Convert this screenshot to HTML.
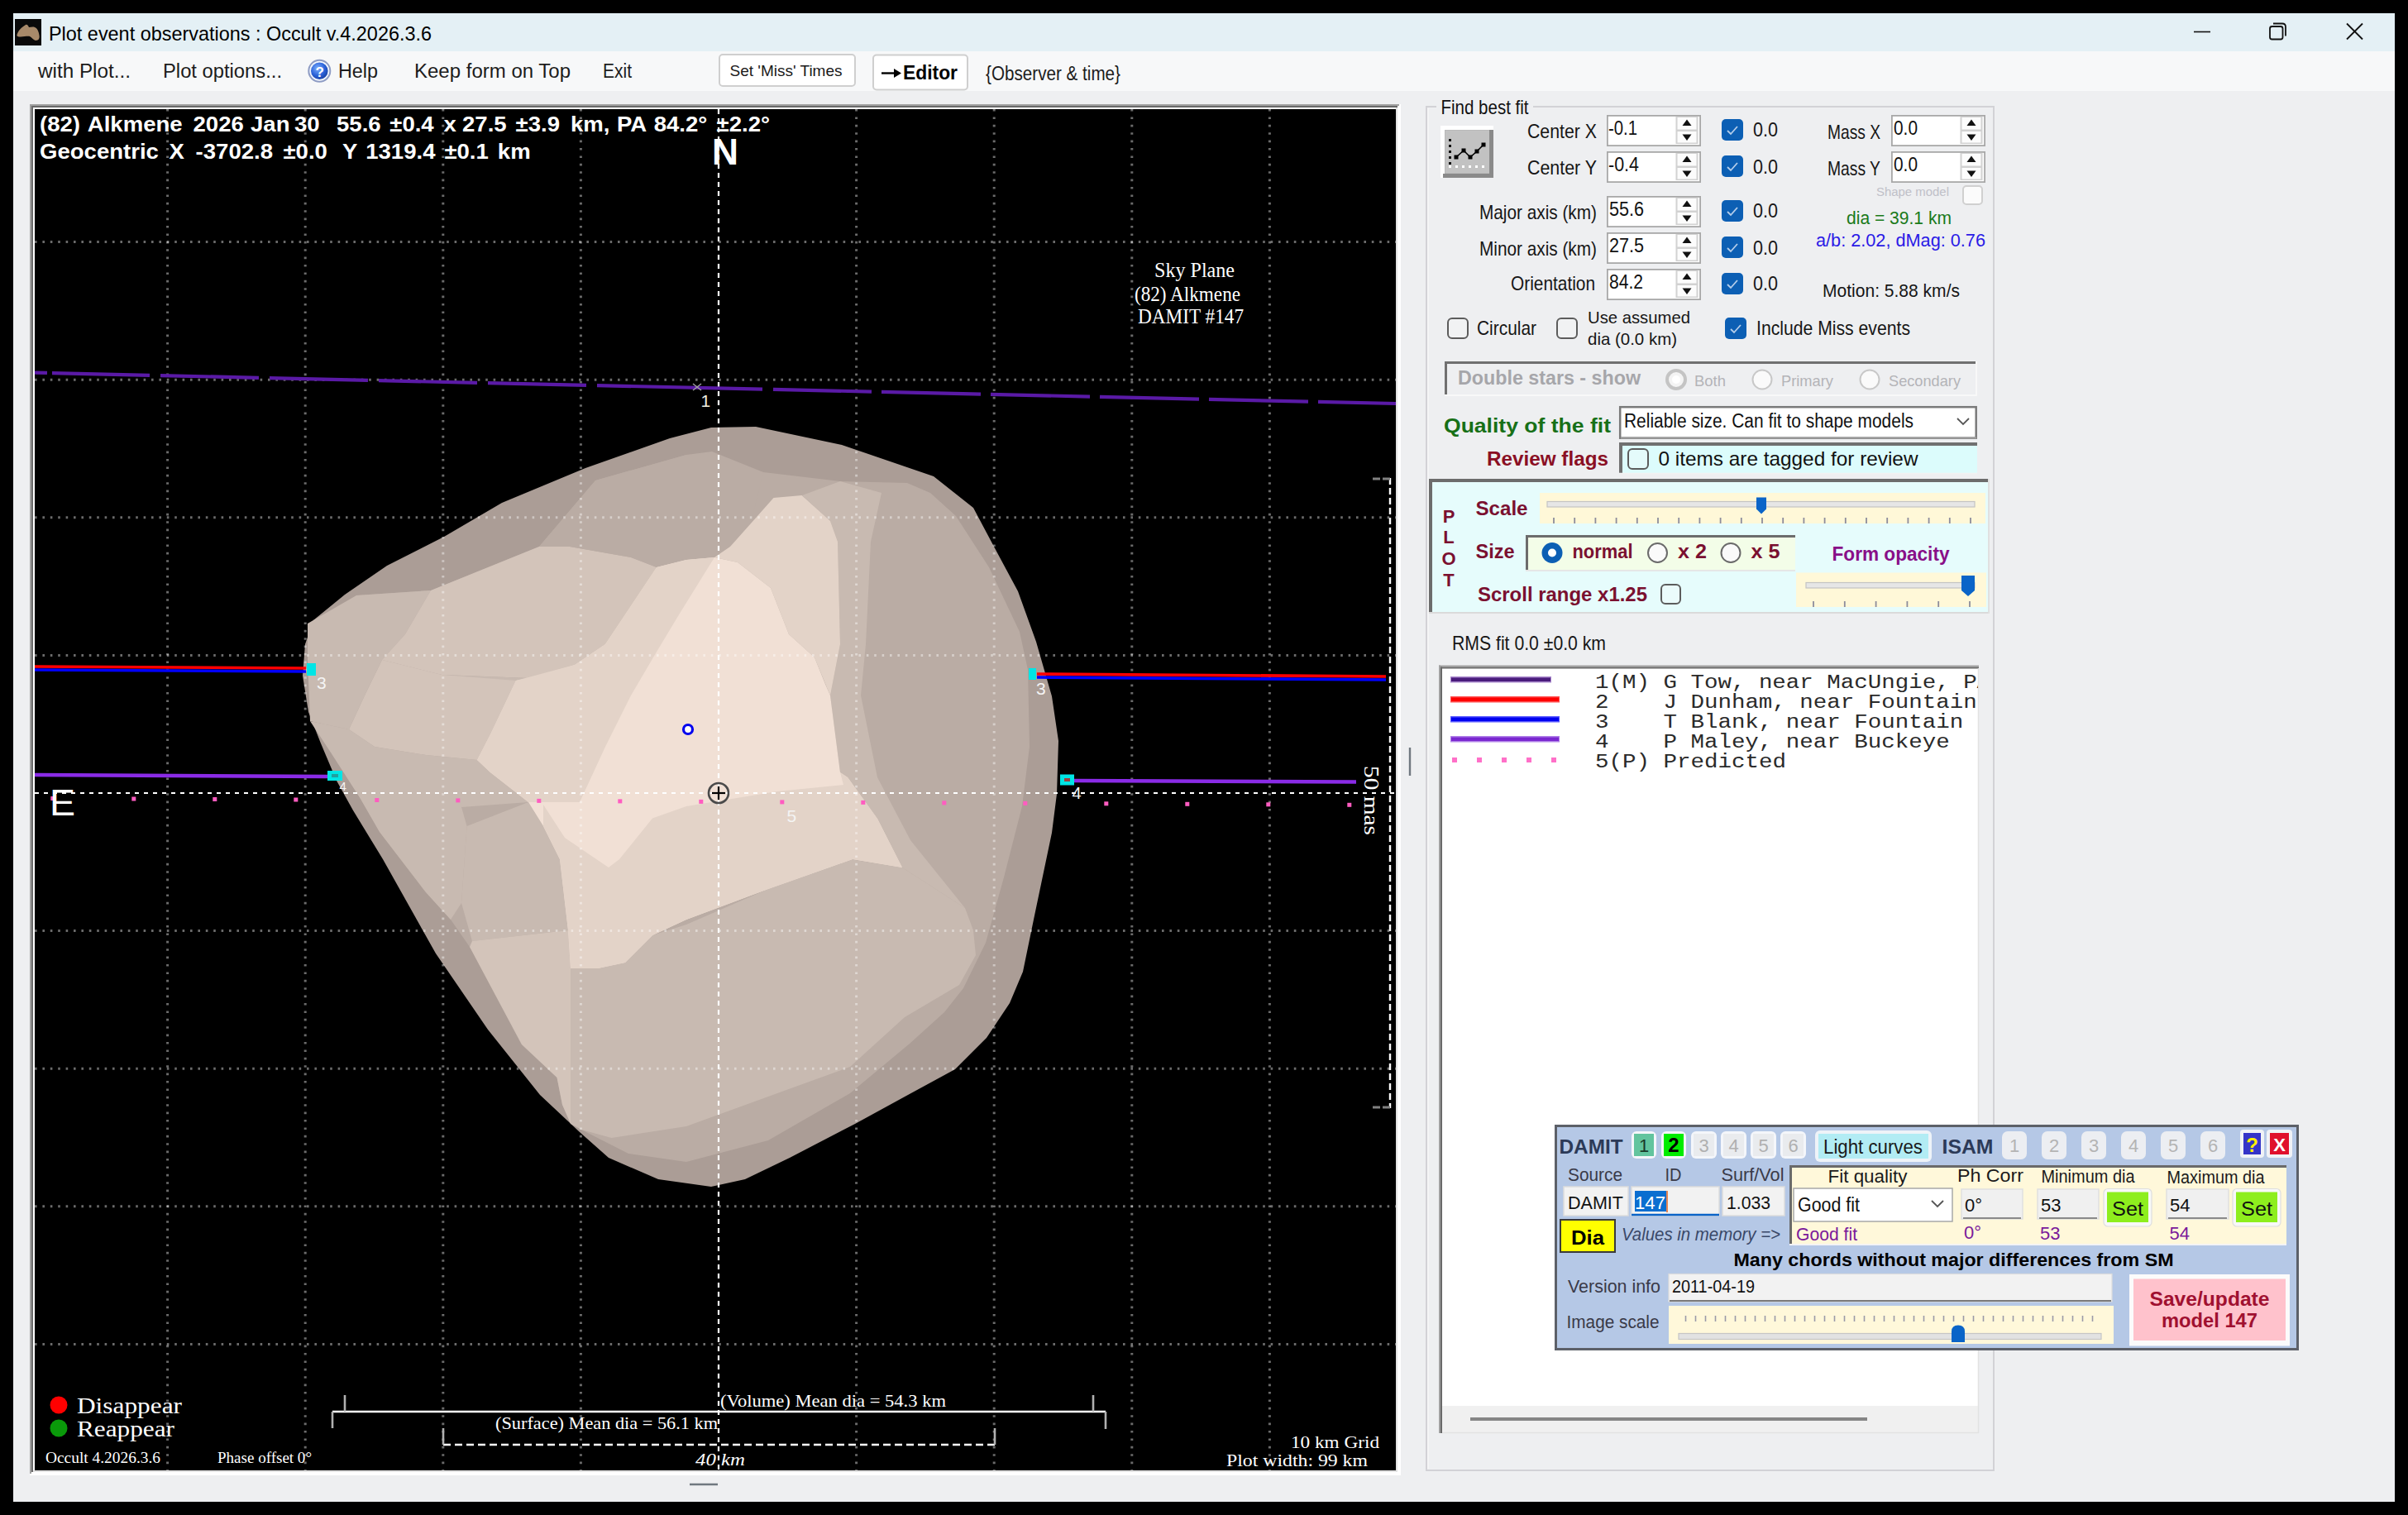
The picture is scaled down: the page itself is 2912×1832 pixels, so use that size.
<!DOCTYPE html>
<html><head><meta charset="utf-8"><title>Plot event observations : Occult v.4.2026.3.6</title>
<style>html,body{margin:0;padding:0;background:#000;overflow:hidden}svg{display:block}text{white-space:pre}</style>
</head><body>
<svg width="2912" height="1832" viewBox="0 0 2912 1832" font-family='"Liberation Sans", sans-serif'>
<rect x="0.0" y="0.0" width="2912.0" height="1832.0" fill="#000"/>
<rect x="16.0" y="16.0" width="2880.0" height="1800.0" fill="#eeeff1"/>
<rect x="16.0" y="16.0" width="2880.0" height="46.0" fill="#e4f0f5"/>
<rect x="16.0" y="62.0" width="2880.0" height="48.0" fill="#f7f8f9"/>
<rect x="18.0" y="23.0" width="32.0" height="32.0" fill="#0a0a0a"/>
<path d="M20.5,42 C22,37 26,33 31,30 C33,29 34,31 35,33 C37,33 40,32 42,33 C45,34 47,38 47.5,43 C48,46 47,49 43,49 C40,48 38,45 36,44 C33,43.5 29,44.5 25,44.5 C22,44.5 20,44 20.5,42 Z" fill="#a88a6a"/>
<text x="59.0" y="49.0" font-size="24" fill="#000" textLength="463.0" lengthAdjust="spacingAndGlyphs">Plot event observations : Occult v.4.2026.3.6</text>
<line x1="2653.0" y1="38.5" x2="2673.0" y2="38.5" stroke="#111" stroke-width="1.6"/>
<rect x="2745" y="32" width="15.5" height="15.5" rx="2.5" fill="none" stroke="#111" stroke-width="1.8"/>
<path d="M2749,28.5 H2760 Q2764,28.5 2764,32.5 V43.5" fill="none" stroke="#111" stroke-width="1.8"/>
<line x1="2838.0" y1="28.5" x2="2857.0" y2="47.5" stroke="#111" stroke-width="1.8"/>
<line x1="2857.0" y1="28.5" x2="2838.0" y2="47.5" stroke="#111" stroke-width="1.8"/>
<text x="46.0" y="93.5" font-size="23" fill="#1c1c1c" textLength="112.0" lengthAdjust="spacingAndGlyphs">with Plot...</text>
<text x="197.0" y="93.5" font-size="23" fill="#1c1c1c" textLength="144.0" lengthAdjust="spacingAndGlyphs">Plot options...</text>
<defs><radialGradient id="hg" cx="0.4" cy="0.35" r="0.7"><stop offset="0" stop-color="#7fb0ff"/><stop offset="0.6" stop-color="#2a62d8"/><stop offset="1" stop-color="#1a3fa0"/></radialGradient></defs>
<circle cx="386.3" cy="85.8" r="13.0" fill="#f4f8ff" stroke="#8e9cc4" stroke-width="2"/>
<circle cx="386.3" cy="85.8" r="10.3" fill="url(#hg)"/>
<text x="386.8" y="92.5" font-size="17" fill="#fff" font-weight="bold" text-anchor="middle">?</text>
<text x="409.0" y="93.5" font-size="23" fill="#1c1c1c" textLength="48.0" lengthAdjust="spacingAndGlyphs">Help</text>
<text x="501.0" y="93.5" font-size="23" fill="#1c1c1c" textLength="189.0" lengthAdjust="spacingAndGlyphs">Keep form on Top</text>
<text x="729.0" y="93.5" font-size="23" fill="#1c1c1c" textLength="35.0" lengthAdjust="spacingAndGlyphs">Exit</text>
<rect x="870" y="66" width="164" height="38" rx="4" fill="#fff" stroke="#cfcfcf" stroke-width="2"/>
<text x="882.5" y="92.0" font-size="19" fill="#1a1a1a" textLength="136.0" lengthAdjust="spacingAndGlyphs">Set 'Miss' Times</text>
<rect x="1056" y="66.5" width="114" height="42" rx="4" fill="#fff" stroke="#cfcfcf" stroke-width="2"/>
<line x1="1066.0" y1="88.5" x2="1084.0" y2="88.5" stroke="#000" stroke-width="2.4"/>
<polygon points="1090.0,88.5 1081.0,83.0 1081.0,94.0" fill="#000"/>
<text x="1092.0" y="95.6" font-size="24" fill="#000" font-weight="bold" textLength="66.0" lengthAdjust="spacingAndGlyphs">Editor</text>
<text x="1192.0" y="97.0" font-size="23" fill="#1c1c1c" textLength="163.0" lengthAdjust="spacingAndGlyphs">{Observer &amp; time}</text>
<rect x="36.0" y="126.0" width="1658.0" height="1658.0" fill="#fff"/>
<rect x="36.0" y="126.0" width="1656.0" height="2.0" fill="#a0a0a0"/>
<rect x="36.0" y="126.0" width="2.0" height="1656.0" fill="#a0a0a0"/>
<rect x="38.0" y="128.0" width="1652.0" height="2.0" fill="#696969"/>
<rect x="38.0" y="128.0" width="2.0" height="1652.0" fill="#696969"/>
<rect x="1688.0" y="130.0" width="2.0" height="1650.0" fill="#e3e3e3"/>
<rect x="40.0" y="1778.0" width="1650.0" height="2.0" fill="#e3e3e3"/>
<rect x="40.0" y="130.0" width="1648.0" height="2.0" fill="#fff"/>
<rect x="40.0" y="130.0" width="2.0" height="1648.0" fill="#fff"/>
<rect x="42.0" y="132.0" width="1646.0" height="1646.0" fill="#000"/>
<defs><clipPath id="pc"><rect x="42" y="132" width="1646" height="1646"/></clipPath></defs>
<g clip-path="url(#pc)">
<polygon points="860.0,517.0 914.0,516.0 1018.0,538.0 1129.0,576.0 1177.0,614.0 1202.0,661.0 1231.0,715.0 1253.0,776.0 1272.0,842.0 1280.0,896.0 1278.0,960.0 1272.0,1007.0 1250.0,1112.0 1237.0,1175.0 1221.0,1213.0 1193.0,1255.0 1155.0,1293.0 1098.0,1324.0 1034.0,1359.0 955.0,1400.0 901.0,1426.0 860.0,1435.0 796.0,1426.0 736.0,1400.0 701.0,1369.0 653.0,1324.0 590.0,1245.0 527.0,1153.0 463.0,1039.0 427.0,980.0 407.0,944.0 388.0,899.0 373.0,861.0 366.0,817.0 369.0,779.0 379.0,750.0 417.0,719.0 468.0,684.0 537.0,649.0 607.0,608.0 708.0,566.0 810.0,530.0" fill="#ab9d96"/>
<polygon points="380.0,770.0 431.0,720.0 521.0,714.0 652.0,661.0 720.0,581.0 830.0,550.0 923.0,571.0 1016.0,582.0 1097.0,584.0 1125.0,596.0 1156.0,624.0 1196.0,686.0 1233.0,764.0 1243.0,810.0 1245.0,903.0 1236.0,975.0 1214.0,1061.0 1192.0,1140.0 1165.0,1195.0 1142.0,1224.0 1100.0,1262.0 1028.0,1322.0 929.0,1379.0 830.0,1405.0 760.0,1395.0 703.0,1366.0 680.0,1336.0 673.5,1303.0 630.6,1263.0 568.0,1145.0 545.0,1112.0 515.0,1079.0 459.0,1006.0 436.0,966.0 400.0,905.0 378.0,850.0" fill="#baaca4"/>
<polygon points="372.0,754.0 431.0,720.0 521.0,714.0 490.0,767.0 462.0,798.0 372.0,798.0" fill="#c8bab1"/>
<polygon points="521.0,714.0 652.0,661.0 689.0,661.0 763.0,674.0 794.0,686.0 732.0,779.0 695.0,804.0 639.0,820.0 534.0,816.0 462.0,798.0 490.0,767.0" fill="#d3c4ba"/>
<polygon points="652.0,661.0 720.0,581.0 830.0,550.0 861.0,546.0 923.0,571.0 908.0,633.0 883.0,661.0 864.0,674.0 830.0,677.0 794.0,686.0 763.0,674.0 689.0,661.0" fill="#baaca4"/>
<polygon points="462.0,798.0 534.0,816.0 639.0,820.0 695.0,804.0 700.0,818.0 640.0,836.0 534.0,832.0 466.0,812.0" fill="#c8bab1"/>
<polygon points="422.0,882.0 441.0,841.0 462.0,798.0 534.0,816.0 624.0,823.0 593.0,888.0 577.0,919.0 515.0,913.0 453.0,903.0" fill="#d3c4ba"/>
<polygon points="375.0,872.0 422.0,882.0 453.0,903.0 515.0,913.0 577.0,919.0 593.0,934.0 639.0,970.0 558.0,976.0 564.6,999.0 558.0,1092.0 545.0,1112.0 515.0,1079.0 459.0,1006.0 436.0,966.0 400.0,910.0" fill="#c8bab1"/>
<polygon points="564.6,999.0 639.0,970.0 657.0,999.0 677.0,1039.0 687.0,1125.0 571.0,1138.0 558.0,1092.0" fill="#c8bab1"/>
<polygon points="571.0,1138.0 687.0,1125.0 690.0,1171.0 690.0,1359.0 680.0,1336.0 673.5,1303.0 631.0,1263.0 568.0,1145.0" fill="#d3c4ba"/>
<polygon points="690.0,1171.0 723.0,1171.0 756.0,1164.0 789.0,1131.0 830.0,1118.0 929.0,1075.0 1028.0,1039.0 1091.0,1049.0 1167.0,1098.0 1177.0,1125.0 1180.0,1155.0 1160.0,1191.0 1094.0,1230.0 1028.0,1290.0 929.0,1326.0 830.0,1362.0 739.5,1376.0 703.0,1366.0 690.0,1359.0" fill="#c8bab1"/>
<polygon points="970.0,599.0 1016.0,582.0 1066.0,596.0 1053.0,655.0 1047.0,779.0 1041.0,841.0 1061.0,940.0 1101.0,1016.0 1167.0,1098.0 1091.0,1049.0 1061.0,990.0 1025.0,940.0 1016.0,934.0 1004.0,841.0 1016.0,779.0 1013.0,655.0 1004.0,630.0" fill="#c8bab1"/>
<polygon points="864.0,674.0 883.0,661.0 908.0,633.0 935.5,602.0 969.6,599.0 1004.0,630.0 1013.0,655.0 1016.0,779.0 1004.0,841.0 985.0,795.0 954.0,767.0 932.0,711.0 892.0,680.0" fill="#e3d3c8"/>
<polygon points="830.0,677.0 864.0,674.0 892.0,680.0 932.0,711.0 954.0,767.0 985.0,795.0 997.5,826.0 1004.0,841.0 1016.0,934.0 1025.0,940.0 1061.0,990.0 1091.0,1049.0 1031.0,1039.0 929.0,1075.0 830.0,1112.0 789.0,1131.0 756.0,1164.0 723.0,1171.0 690.0,1171.0 687.0,1125.0 677.0,1039.0 657.0,999.0 639.0,970.0 593.0,934.0 577.0,919.0 593.0,888.0 624.0,823.0 639.0,820.0 695.0,804.0 732.0,779.0 794.0,686.0" fill="#f1e0d5"/>
<polygon points="1016.0,934.0 1025.0,940.0 1061.0,990.0 1091.0,1049.0 1031.0,1039.0 929.0,1075.0 830.0,1112.0 789.0,1131.0 756.0,1164.0 723.0,1171.0 690.0,1171.0 687.0,1125.0 677.0,1039.0 657.0,999.0 657.0,973.0 683.0,1013.0 706.5,1029.0 736.0,1049.0 749.0,1039.0 789.0,989.5 830.0,975.0 940.0,957.0 1020.0,949.0" fill="#e3d3c8"/>
<polygon points="372.0,798.0 462.0,798.0 441.0,841.0 422.0,882.0 375.0,872.0" fill="#c8bab1"/>
<polygon points="593.0,888.0 624.0,823.0 695.0,804.0 732.0,779.0 794.0,686.0 830.0,677.0 864.0,674.0 820.0,745.0 790.0,795.0 763.0,841.0 732.0,903.0 701.0,970.0 639.0,970.0 593.0,934.0 577.0,919.0" fill="#e3d3c8"/>
<line x1="202.6" y1="132.0" x2="202.6" y2="1778.0" stroke="#ffffff" stroke-width="3" stroke-dasharray="2.6 6.8" stroke-opacity="0.42"/>
<line x1="369.2" y1="132.0" x2="369.2" y2="1778.0" stroke="#ffffff" stroke-width="3" stroke-dasharray="2.6 6.8" stroke-opacity="0.42"/>
<line x1="535.8" y1="132.0" x2="535.8" y2="1778.0" stroke="#ffffff" stroke-width="3" stroke-dasharray="2.6 6.8" stroke-opacity="0.42"/>
<line x1="702.4" y1="132.0" x2="702.4" y2="1778.0" stroke="#ffffff" stroke-width="3" stroke-dasharray="2.6 6.8" stroke-opacity="0.42"/>
<line x1="1035.6" y1="132.0" x2="1035.6" y2="1778.0" stroke="#ffffff" stroke-width="3" stroke-dasharray="2.6 6.8" stroke-opacity="0.42"/>
<line x1="1202.2" y1="132.0" x2="1202.2" y2="1778.0" stroke="#ffffff" stroke-width="3" stroke-dasharray="2.6 6.8" stroke-opacity="0.42"/>
<line x1="1368.8" y1="132.0" x2="1368.8" y2="1778.0" stroke="#ffffff" stroke-width="3" stroke-dasharray="2.6 6.8" stroke-opacity="0.42"/>
<line x1="1535.4" y1="132.0" x2="1535.4" y2="1778.0" stroke="#ffffff" stroke-width="3" stroke-dasharray="2.6 6.8" stroke-opacity="0.42"/>
<line x1="42.0" y1="292.6" x2="1688.0" y2="292.6" stroke="#ffffff" stroke-width="3" stroke-dasharray="2.6 6.8" stroke-opacity="0.42"/>
<line x1="42.0" y1="459.2" x2="1688.0" y2="459.2" stroke="#ffffff" stroke-width="3" stroke-dasharray="2.6 6.8" stroke-opacity="0.42"/>
<line x1="42.0" y1="625.8" x2="1688.0" y2="625.8" stroke="#ffffff" stroke-width="3" stroke-dasharray="2.6 6.8" stroke-opacity="0.42"/>
<line x1="42.0" y1="792.4" x2="1688.0" y2="792.4" stroke="#ffffff" stroke-width="3" stroke-dasharray="2.6 6.8" stroke-opacity="0.42"/>
<line x1="42.0" y1="1125.6" x2="1688.0" y2="1125.6" stroke="#ffffff" stroke-width="3" stroke-dasharray="2.6 6.8" stroke-opacity="0.42"/>
<line x1="42.0" y1="1292.2" x2="1688.0" y2="1292.2" stroke="#ffffff" stroke-width="3" stroke-dasharray="2.6 6.8" stroke-opacity="0.42"/>
<line x1="42.0" y1="1458.8" x2="1688.0" y2="1458.8" stroke="#ffffff" stroke-width="3" stroke-dasharray="2.6 6.8" stroke-opacity="0.42"/>
<line x1="42.0" y1="1625.4" x2="1688.0" y2="1625.4" stroke="#ffffff" stroke-width="3" stroke-dasharray="2.6 6.8" stroke-opacity="0.42"/>
<line x1="869.0" y1="132.0" x2="869.0" y2="1778.0" stroke="#fff" stroke-width="2.2" stroke-dasharray="6 5"/>
<line x1="42.0" y1="959.0" x2="1688.0" y2="959.0" stroke="#fff" stroke-width="2.2" stroke-dasharray="5 6"/>
</g>
<g clip-path="url(#pc)">
<line x1="42.0" y1="450.6" x2="57.0" y2="450.9" stroke="#5a1aa6" stroke-width="4.2"/>
<line x1="63.0" y1="451.1" x2="181.0" y2="453.8" stroke="#5a1aa6" stroke-width="4.2"/>
<line x1="194.0" y1="454.1" x2="313.0" y2="456.8" stroke="#5a1aa6" stroke-width="4.2"/>
<line x1="326.0" y1="457.1" x2="445.0" y2="459.8" stroke="#5a1aa6" stroke-width="4.2"/>
<line x1="458.0" y1="460.1" x2="577.0" y2="462.8" stroke="#5a1aa6" stroke-width="4.2"/>
<line x1="590.0" y1="463.1" x2="709.0" y2="465.8" stroke="#5a1aa6" stroke-width="4.2"/>
<line x1="722.0" y1="466.1" x2="922.0" y2="470.6" stroke="#5a1aa6" stroke-width="4.2"/>
<line x1="935.0" y1="470.9" x2="1054.0" y2="473.6" stroke="#5a1aa6" stroke-width="4.2"/>
<line x1="1066.0" y1="473.9" x2="1186.0" y2="476.6" stroke="#5a1aa6" stroke-width="4.2"/>
<line x1="1198.0" y1="476.9" x2="1318.0" y2="479.6" stroke="#5a1aa6" stroke-width="4.2"/>
<line x1="1330.0" y1="479.9" x2="1450.0" y2="482.6" stroke="#5a1aa6" stroke-width="4.2"/>
<line x1="1462.0" y1="482.9" x2="1582.0" y2="485.6" stroke="#5a1aa6" stroke-width="4.2"/>
<line x1="1594.0" y1="485.9" x2="1688.0" y2="488.0" stroke="#5a1aa6" stroke-width="4.2"/>
<line x1="42.0" y1="806.0" x2="370.0" y2="808.0" stroke="#ff0000" stroke-width="3.6"/>
<line x1="42.0" y1="810.0" x2="370.0" y2="812.0" stroke="#0000ff" stroke-width="3.6"/>
<line x1="1254.0" y1="815.0" x2="1676.0" y2="818.0" stroke="#ff0000" stroke-width="3.6"/>
<line x1="1254.0" y1="819.0" x2="1676.0" y2="822.0" stroke="#0000ff" stroke-width="3.6"/>
<line x1="42.0" y1="937.0" x2="396.0" y2="939.0" stroke="#8a2be6" stroke-width="4.4"/>
<line x1="1299.0" y1="944.0" x2="1640.0" y2="945.5" stroke="#8a2be6" stroke-width="4.4"/>
<rect x="371.0" y="802.0" width="11.0" height="15.0" fill="#00e5e5"/>
<rect x="396.0" y="932.0" width="18.0" height="12.0" fill="#00e5e5"/>
<rect x="401.0" y="936.0" width="8.0" height="4.0" fill="#20a0a0"/>
<rect x="1244.0" y="808.0" width="9.0" height="14.0" fill="#00e5e5"/>
<rect x="1282.0" y="936.5" width="17.0" height="13.0" fill="#00e5e5"/>
<rect x="1287.0" y="941.0" width="7.0" height="4.0" fill="#a04040"/>
<text x="383.0" y="833.0" font-size="21" fill="#f4f4f4">3</text>
<text x="410.5" y="955.5" font-size="15" fill="#f4f4f4">4</text>
<text x="1253.0" y="840.0" font-size="21" fill="#f4f4f4">3</text>
<text x="1296.5" y="965.5" font-size="20" fill="#f4f4f4">4</text>
<text x="847.5" y="492.0" font-size="21" fill="#f0f0e0">1</text>
<text x="951.5" y="993.5" font-size="21" fill="#f4f4f4">5</text>
<line x1="838.0" y1="464.0" x2="848.0" y2="472.0" stroke="#a0a0a0" stroke-width="1.5"/>
<line x1="848.0" y1="464.0" x2="838.0" y2="472.0" stroke="#a0a0a0" stroke-width="1.5"/>
<rect x="61.3" y="963.0" width="5.0" height="5.0" fill="#ff5cc0"/>
<rect x="159.3" y="963.5" width="5.0" height="5.0" fill="#ff5cc0"/>
<rect x="257.3" y="964.0" width="5.0" height="5.0" fill="#ff5cc0"/>
<rect x="355.3" y="964.5" width="5.0" height="5.0" fill="#ff5cc0"/>
<rect x="453.3" y="965.0" width="5.0" height="5.0" fill="#ff5cc0"/>
<rect x="551.3" y="965.4" width="5.0" height="5.0" fill="#ff5cc0"/>
<rect x="649.3" y="965.9" width="5.0" height="5.0" fill="#ff5cc0"/>
<rect x="747.3" y="966.4" width="5.0" height="5.0" fill="#ff5cc0"/>
<rect x="845.3" y="966.9" width="5.0" height="5.0" fill="#ff5cc0"/>
<rect x="943.3" y="967.4" width="5.0" height="5.0" fill="#ff5cc0"/>
<rect x="1041.3" y="967.9" width="5.0" height="5.0" fill="#ff5cc0"/>
<rect x="1139.3" y="968.4" width="5.0" height="5.0" fill="#ff5cc0"/>
<rect x="1237.3" y="968.9" width="5.0" height="5.0" fill="#ff5cc0"/>
<rect x="1335.3" y="969.3" width="5.0" height="5.0" fill="#ff5cc0"/>
<rect x="1433.3" y="969.8" width="5.0" height="5.0" fill="#ff5cc0"/>
<rect x="1531.3" y="970.3" width="5.0" height="5.0" fill="#ff5cc0"/>
<rect x="1629.3" y="970.8" width="5.0" height="5.0" fill="#ff5cc0"/>
<circle cx="832.0" cy="882.0" r="5.5" fill="#fff" stroke="#0000ee" stroke-width="3.2"/>
<circle cx="869.0" cy="959.0" r="12.0" fill="none" stroke="#4a4a4a" stroke-width="2.6"/>
<line x1="861.0" y1="959.0" x2="877.0" y2="959.0" stroke="#000" stroke-width="2.2"/>
<line x1="869.0" y1="951.0" x2="869.0" y2="967.0" stroke="#000" stroke-width="2.2"/>
<line x1="1681.0" y1="578.0" x2="1681.0" y2="1340.0" stroke="#fff" stroke-width="2.4" stroke-dasharray="8 4"/>
<line x1="1660.0" y1="579.0" x2="1682.0" y2="579.0" stroke="#808080" stroke-width="3" stroke-dasharray="9 3"/>
<line x1="1660.0" y1="1339.0" x2="1682.0" y2="1339.0" stroke="#808080" stroke-width="3" stroke-dasharray="9 3"/>
<g transform="translate(48,159) scale(1.06,1)"><text x="0" y="0" font-size="26" font-weight="bold" fill="#fff"><tspan x="0.0">(82)</tspan><tspan x="54.5">Alkmene</tspan><tspan x="175.0">2026</tspan><tspan x="240.6">Jan</tspan><tspan x="290.6">30</tspan><tspan x="338.7">55.6</tspan><tspan x="399.3">±0.4</tspan><tspan x="460.8">x</tspan><tspan x="482.1">27.5</tspan><tspan x="543.0">±3.9</tspan><tspan x="605.7">km,</tspan><tspan x="658.5">PA</tspan><tspan x="700.7">84.2°</tspan><tspan x="772.2">±2.2°</tspan></text></g>
<g transform="translate(48,192) scale(1.06,1)"><text x="0" y="0" font-size="26" font-weight="bold" fill="#fff"><tspan x="0.0">Geocentric</tspan><tspan x="147.6">X</tspan><tspan x="177.9">-3702.8</tspan><tspan x="277.8">±0.0</tspan><tspan x="345.3">Y</tspan><tspan x="371.9">1319.4</tspan><tspan x="461.7">±0.1</tspan><tspan x="522.5">km</tspan></text></g>
<text x="861.0" y="199.0" font-size="45" fill="#fff" font-weight="bold" textLength="32.0" lengthAdjust="spacingAndGlyphs">N</text>
<text x="60.0" y="985.5" font-size="45" fill="#fff" textLength="31.0" lengthAdjust="spacingAndGlyphs">E</text>
<text x="1396.0" y="335.0" font-size="25" fill="#fff" font-family='"Liberation Serif", serif' textLength="97.0" lengthAdjust="spacingAndGlyphs">Sky Plane</text>
<text x="1372.0" y="364.0" font-size="25" fill="#fff" font-family='"Liberation Serif", serif' textLength="128.0" lengthAdjust="spacingAndGlyphs">(82) Alkmene</text>
<text x="1376.0" y="391.0" font-size="25" fill="#fff" font-family='"Liberation Serif", serif' textLength="128.0" lengthAdjust="spacingAndGlyphs">DAMIT #147</text>
<text transform='translate(1650,926) rotate(90)' x='0' y='0' font-size='25' fill='#fff' font-family='"Liberation Serif", serif' textLength='84' lengthAdjust='spacingAndGlyphs'>50 mas</text>
<circle cx="71.0" cy="1699.0" r="10.5" fill="#ff0000"/>
<circle cx="71.0" cy="1727.0" r="10.5" fill="#0a9a0a"/>
<text x="93.0" y="1709.0" font-size="28" fill="#fff" font-family='"Liberation Serif", serif' textLength="127.0" lengthAdjust="spacingAndGlyphs">Disappear</text>
<text x="93.0" y="1737.0" font-size="28" fill="#fff" font-family='"Liberation Serif", serif' textLength="118.0" lengthAdjust="spacingAndGlyphs">Reappear</text>
<text x="55.0" y="1769.0" font-size="18" fill="#fff" font-family='"Liberation Serif", serif' textLength="139.0" lengthAdjust="spacingAndGlyphs">Occult 4.2026.3.6</text>
<text x="263.0" y="1769.0" font-size="18" fill="#fff" font-family='"Liberation Serif", serif' textLength="114.0" lengthAdjust="spacingAndGlyphs">Phase offset 0°</text>
<line x1="402.0" y1="1707.0" x2="1337.0" y2="1707.0" stroke="#fff" stroke-width="2.6"/>
<line x1="417.0" y1="1687.0" x2="417.0" y2="1707.0" stroke="#b0b0b0" stroke-width="2.6"/>
<line x1="402.0" y1="1707.0" x2="402.0" y2="1727.0" stroke="#b0b0b0" stroke-width="2.6"/>
<line x1="1322.0" y1="1687.0" x2="1322.0" y2="1707.0" stroke="#b0b0b0" stroke-width="2.6"/>
<line x1="1337.0" y1="1707.0" x2="1337.0" y2="1728.0" stroke="#b0b0b0" stroke-width="2.6"/>
<line x1="536.0" y1="1747.0" x2="1203.0" y2="1747.0" stroke="#fff" stroke-width="2.6" stroke-dasharray="9 5"/>
<line x1="536.0" y1="1727.0" x2="536.0" y2="1747.0" stroke="#b0b0b0" stroke-width="2.6"/>
<line x1="1203.0" y1="1727.0" x2="1203.0" y2="1747.0" stroke="#b0b0b0" stroke-width="2.6"/>
<text x="599.0" y="1728.0" font-size="21" fill="#fff" font-family='"Liberation Serif", serif' textLength="269.0" lengthAdjust="spacingAndGlyphs">(Surface) Mean dia = 56.1 km</text>
<text x="871.0" y="1701.0" font-size="21" fill="#fff" font-family='"Liberation Serif", serif' textLength="273.0" lengthAdjust="spacingAndGlyphs">(Volume) Mean dia = 54.3 km</text>
<text x="841.0" y="1772.0" font-size="21" fill="#fff" font-family='"Liberation Serif", serif' font-style="italic" textLength="60.0" lengthAdjust="spacingAndGlyphs">40 km</text>
<text x="1561.0" y="1751.0" font-size="21" fill="#fff" font-family='"Liberation Serif", serif' textLength="107.0" lengthAdjust="spacingAndGlyphs">10 km Grid</text>
<text x="1483.0" y="1773.0" font-size="21" fill="#fff" font-family='"Liberation Serif", serif' textLength="171.0" lengthAdjust="spacingAndGlyphs">Plot width: 99 km</text>
</g>
<line x1="1725.0" y1="129.0" x2="1725.0" y2="1778.0" stroke="#d2d2d6" stroke-width="2"/>
<line x1="1724.0" y1="1778.0" x2="2412.0" y2="1778.0" stroke="#d2d2d6" stroke-width="2"/>
<line x1="2411.0" y1="129.0" x2="2411.0" y2="1778.0" stroke="#d2d2d6" stroke-width="2"/>
<line x1="1724.0" y1="129.0" x2="1737.0" y2="129.0" stroke="#d2d2d6" stroke-width="2"/>
<line x1="1854.0" y1="129.0" x2="2412.0" y2="129.0" stroke="#d2d2d6" stroke-width="2"/>
<line x1="1727.0" y1="131.0" x2="1727.0" y2="1776.0" stroke="#fafafa" stroke-width="1"/>
<text x="1742.5" y="137.5" font-size="24" fill="#111" textLength="106.0" lengthAdjust="spacingAndGlyphs">Find best fit</text>
<rect x="1742.0" y="152.0" width="64.0" height="63.0" fill="#fff"/>
<rect x="1747.0" y="157.0" width="54.0" height="53.0" fill="#b9b9b9"/>
<defs><linearGradient id="bg1" x1="0" y1="0" x2="1" y2="1"><stop offset="0" stop-color="#a8a8a8"/><stop offset="0.5" stop-color="#d4d4d4"/><stop offset="1" stop-color="#b0b0b0"/></linearGradient></defs>
<rect x="1748.0" y="158.0" width="53.0" height="51.0" fill="#c2c2c2"/>
<rect x="1801.0" y="157.0" width="5.0" height="58.0" fill="#8a8a8a"/>
<rect x="1745.0" y="210.0" width="61.0" height="5.0" fill="#8a8a8a"/>
<rect x="1752.0" y="168.0" width="3.0" height="3.0" fill="#111"/>
<rect x="1752.0" y="175.0" width="3.0" height="3.0" fill="#111"/>
<rect x="1752.0" y="182.0" width="3.0" height="3.0" fill="#111"/>
<rect x="1752.0" y="189.0" width="3.0" height="3.0" fill="#111"/>
<rect x="1752.0" y="196.0" width="3.0" height="3.0" fill="#111"/>
<rect x="1752.0" y="200.0" width="3.0" height="3.0" fill="#fff"/>
<rect x="1760.0" y="200.0" width="3.0" height="3.0" fill="#fff"/>
<rect x="1768.0" y="200.0" width="3.0" height="3.0" fill="#fff"/>
<rect x="1776.0" y="200.0" width="3.0" height="3.0" fill="#fff"/>
<rect x="1784.0" y="200.0" width="3.0" height="3.0" fill="#fff"/>
<rect x="1792.0" y="200.0" width="3.0" height="3.0" fill="#fff"/>
<polyline points="1761.0,190.0 1770.0,182.0 1778.0,190.0 1786.0,183.0 1794.0,175.0" fill="none" stroke="#000" stroke-width="1.6"/>
<rect x="1758.5" y="187.5" width="5.0" height="5.0" fill="#000"/>
<rect x="1767.5" y="179.5" width="5.0" height="5.0" fill="#000"/>
<rect x="1775.5" y="187.5" width="5.0" height="5.0" fill="#000"/>
<rect x="1783.5" y="180.5" width="5.0" height="5.0" fill="#000"/>
<rect x="1791.5" y="172.5" width="5.0" height="5.0" fill="#000"/>
<text x="1931.0" y="167.0" font-size="24" fill="#161616" text-anchor="end" textLength="84.0" lengthAdjust="spacingAndGlyphs">Center X</text>
<text x="1931.0" y="211.0" font-size="24" fill="#161616" text-anchor="end" textLength="84.0" lengthAdjust="spacingAndGlyphs">Center Y</text>
<text x="1931.0" y="265.0" font-size="24" fill="#161616" text-anchor="end" textLength="142.0" lengthAdjust="spacingAndGlyphs">Major axis (km)</text>
<text x="1931.0" y="309.0" font-size="24" fill="#161616" text-anchor="end" textLength="142.0" lengthAdjust="spacingAndGlyphs">Minor axis (km)</text>
<text x="1929.0" y="351.0" font-size="24" fill="#161616" text-anchor="end" textLength="102.0" lengthAdjust="spacingAndGlyphs">Orientation</text>
<rect x="1943.0" y="139.0" width="114.0" height="38.0" fill="#fff"/>
<rect x="1943.9" y="139.9" width="112.2" height="36.2" fill="none" stroke="#a8a8a8" stroke-width="1.8"/>
<rect x="2026.5" y="141.0" width="27.0" height="33.0" fill="#d2d2d2"/>
<rect x="2028.5" y="142.0" width="23.0" height="14.5" fill="#fcfcfc"/>
<rect x="2028.5" y="159.0" width="23.0" height="13.5" fill="#fcfcfc"/>
<polygon points="2034.5,152.0 2045.5,152.0 2040.0,144.5" fill="#111"/>
<polygon points="2034.5,162.5 2045.5,162.5 2040.0,170.0" fill="#111"/>
<text x="1945.0" y="163.0" font-size="24" fill="#111" textLength="35.0" lengthAdjust="spacingAndGlyphs">-0.1</text>
<rect x="1943.0" y="183.0" width="114.0" height="38.0" fill="#fff"/>
<rect x="1943.9" y="183.9" width="112.2" height="36.2" fill="none" stroke="#a8a8a8" stroke-width="1.8"/>
<rect x="2026.5" y="185.0" width="27.0" height="33.0" fill="#d2d2d2"/>
<rect x="2028.5" y="186.0" width="23.0" height="14.5" fill="#fcfcfc"/>
<rect x="2028.5" y="203.0" width="23.0" height="13.5" fill="#fcfcfc"/>
<polygon points="2034.5,196.0 2045.5,196.0 2040.0,188.5" fill="#111"/>
<polygon points="2034.5,206.5 2045.5,206.5 2040.0,214.0" fill="#111"/>
<text x="1945.0" y="207.0" font-size="24" fill="#111" textLength="37.0" lengthAdjust="spacingAndGlyphs">-0.4</text>
<rect x="1943.0" y="237.0" width="114.0" height="38.0" fill="#fff"/>
<rect x="1943.9" y="237.9" width="112.2" height="36.2" fill="none" stroke="#a8a8a8" stroke-width="1.8"/>
<rect x="2026.5" y="239.0" width="27.0" height="33.0" fill="#d2d2d2"/>
<rect x="2028.5" y="240.0" width="23.0" height="14.5" fill="#fcfcfc"/>
<rect x="2028.5" y="257.0" width="23.0" height="13.5" fill="#fcfcfc"/>
<polygon points="2034.5,250.0 2045.5,250.0 2040.0,242.5" fill="#111"/>
<polygon points="2034.5,260.5 2045.5,260.5 2040.0,268.0" fill="#111"/>
<text x="1946.0" y="261.0" font-size="24" fill="#111" textLength="42.0" lengthAdjust="spacingAndGlyphs">55.6</text>
<rect x="1943.0" y="281.0" width="114.0" height="38.0" fill="#fff"/>
<rect x="1943.9" y="281.9" width="112.2" height="36.2" fill="none" stroke="#a8a8a8" stroke-width="1.8"/>
<rect x="2026.5" y="283.0" width="27.0" height="33.0" fill="#d2d2d2"/>
<rect x="2028.5" y="284.0" width="23.0" height="14.5" fill="#fcfcfc"/>
<rect x="2028.5" y="301.0" width="23.0" height="13.5" fill="#fcfcfc"/>
<polygon points="2034.5,294.0 2045.5,294.0 2040.0,286.5" fill="#111"/>
<polygon points="2034.5,304.5 2045.5,304.5 2040.0,312.0" fill="#111"/>
<text x="1946.0" y="305.0" font-size="24" fill="#111" textLength="42.0" lengthAdjust="spacingAndGlyphs">27.5</text>
<rect x="1943.0" y="325.0" width="114.0" height="38.0" fill="#fff"/>
<rect x="1943.9" y="325.9" width="112.2" height="36.2" fill="none" stroke="#a8a8a8" stroke-width="1.8"/>
<rect x="2026.5" y="327.0" width="27.0" height="33.0" fill="#d2d2d2"/>
<rect x="2028.5" y="328.0" width="23.0" height="14.5" fill="#fcfcfc"/>
<rect x="2028.5" y="345.0" width="23.0" height="13.5" fill="#fcfcfc"/>
<polygon points="2034.5,338.0 2045.5,338.0 2040.0,330.5" fill="#111"/>
<polygon points="2034.5,348.5 2045.5,348.5 2040.0,356.0" fill="#111"/>
<text x="1946.0" y="349.0" font-size="24" fill="#111" textLength="41.0" lengthAdjust="spacingAndGlyphs">84.2</text>
<rect x="2082" y="144" width="26" height="26" rx="5" fill="#0c5fb4"/>
<polyline points="2089.0,158.0 2093.0,162.0 2101.0,153.0" fill="none" stroke="#b4cdea" stroke-width="1.8"/>
<text x="2120.0" y="165.0" font-size="24" fill="#161616" textLength="30.0" lengthAdjust="spacingAndGlyphs">0.0</text>
<rect x="2082" y="188" width="26" height="26" rx="5" fill="#0c5fb4"/>
<polyline points="2089.0,202.0 2093.0,206.0 2101.0,197.0" fill="none" stroke="#b4cdea" stroke-width="1.8"/>
<text x="2120.0" y="209.5" font-size="24" fill="#161616" textLength="30.0" lengthAdjust="spacingAndGlyphs">0.0</text>
<rect x="2082" y="242" width="26" height="26" rx="5" fill="#0c5fb4"/>
<polyline points="2089.0,256.0 2093.0,260.0 2101.0,251.0" fill="none" stroke="#b4cdea" stroke-width="1.8"/>
<text x="2120.0" y="263.0" font-size="24" fill="#161616" textLength="30.0" lengthAdjust="spacingAndGlyphs">0.0</text>
<rect x="2082" y="286" width="26" height="26" rx="5" fill="#0c5fb4"/>
<polyline points="2089.0,300.0 2093.0,304.0 2101.0,295.0" fill="none" stroke="#b4cdea" stroke-width="1.8"/>
<text x="2120.0" y="307.5" font-size="24" fill="#161616" textLength="30.0" lengthAdjust="spacingAndGlyphs">0.0</text>
<rect x="2082" y="330" width="26" height="26" rx="5" fill="#0c5fb4"/>
<polyline points="2089.0,344.0 2093.0,348.0 2101.0,339.0" fill="none" stroke="#b4cdea" stroke-width="1.8"/>
<text x="2120.0" y="351.0" font-size="24" fill="#161616" textLength="30.0" lengthAdjust="spacingAndGlyphs">0.0</text>
<text x="2274.0" y="167.5" font-size="24" fill="#161616" text-anchor="end" textLength="64.0" lengthAdjust="spacingAndGlyphs">Mass X</text>
<text x="2274.0" y="211.5" font-size="24" fill="#161616" text-anchor="end" textLength="64.0" lengthAdjust="spacingAndGlyphs">Mass Y</text>
<rect x="2287.0" y="139.0" width="114.0" height="38.0" fill="#fff"/>
<rect x="2287.9" y="139.9" width="112.2" height="36.2" fill="none" stroke="#a8a8a8" stroke-width="1.8"/>
<rect x="2370.5" y="141.0" width="27.0" height="33.0" fill="#d2d2d2"/>
<rect x="2372.5" y="142.0" width="23.0" height="14.5" fill="#fcfcfc"/>
<rect x="2372.5" y="159.0" width="23.0" height="13.5" fill="#fcfcfc"/>
<polygon points="2378.5,152.0 2389.5,152.0 2384.0,144.5" fill="#111"/>
<polygon points="2378.5,162.5 2389.5,162.5 2384.0,170.0" fill="#111"/>
<text x="2290.0" y="163.0" font-size="24" fill="#111" textLength="29.0" lengthAdjust="spacingAndGlyphs">0.0</text>
<rect x="2287.0" y="183.0" width="114.0" height="38.0" fill="#fff"/>
<rect x="2287.9" y="183.9" width="112.2" height="36.2" fill="none" stroke="#a8a8a8" stroke-width="1.8"/>
<rect x="2370.5" y="185.0" width="27.0" height="33.0" fill="#d2d2d2"/>
<rect x="2372.5" y="186.0" width="23.0" height="14.5" fill="#fcfcfc"/>
<rect x="2372.5" y="203.0" width="23.0" height="13.5" fill="#fcfcfc"/>
<polygon points="2378.5,196.0 2389.5,196.0 2384.0,188.5" fill="#111"/>
<polygon points="2378.5,206.5 2389.5,206.5 2384.0,214.0" fill="#111"/>
<text x="2290.0" y="207.0" font-size="24" fill="#111" textLength="29.0" lengthAdjust="spacingAndGlyphs">0.0</text>
<text x="2269.0" y="237.0" font-size="14" fill="#c0c0c8" textLength="88.0" lengthAdjust="spacingAndGlyphs">Shape model</text>
<rect x="2374" y="225" width="23" height="22" rx="4" fill="#fbfbfb" stroke="#d0d0d0" stroke-width="2"/>
<text x="2233.0" y="271.0" font-size="22" fill="#1a7a1a" textLength="127.0" lengthAdjust="spacingAndGlyphs">dia = 39.1 km</text>
<text x="2196.0" y="298.0" font-size="22" fill="#2a1ae6" textLength="205.0" lengthAdjust="spacingAndGlyphs">a/b: 2.02, dMag: 0.76</text>
<text x="2204.0" y="359.0" font-size="22" fill="#161616" textLength="166.0" lengthAdjust="spacingAndGlyphs">Motion: 5.88 km/s</text>
<rect x="1751" y="385" width="24" height="24" rx="5" fill="#f8f8f8" fill-opacity="0.3" stroke="#5c5c5c" stroke-width="2"/>
<text x="1786.0" y="405.0" font-size="24" fill="#161616" textLength="72.0" lengthAdjust="spacingAndGlyphs">Circular</text>
<rect x="1883" y="385" width="24" height="24" rx="5" fill="#f8f8f8" fill-opacity="0.3" stroke="#5c5c5c" stroke-width="2"/>
<text x="1920.0" y="391.0" font-size="21" fill="#161616" textLength="124.0" lengthAdjust="spacingAndGlyphs">Use assumed</text>
<text x="1920.0" y="417.0" font-size="21" fill="#161616" textLength="108.0" lengthAdjust="spacingAndGlyphs">dia (0.0 km)</text>
<rect x="2086" y="384" width="26" height="26" rx="5" fill="#0c5fb4"/>
<polyline points="2093.0,398.0 2097.0,402.0 2105.0,393.0" fill="none" stroke="#b4cdea" stroke-width="1.8"/>
<text x="2124.0" y="405.0" font-size="24" fill="#161616" textLength="186.0" lengthAdjust="spacingAndGlyphs">Include Miss events</text>
<rect x="1747.0" y="437.0" width="644.0" height="42.0" fill="#eeeff1"/>
<rect x="1747.0" y="437.0" width="644.0" height="3.0" fill="#707070"/>
<rect x="1747.0" y="437.0" width="3.0" height="42.0" fill="#707070"/>
<line x1="1747.0" y1="478.0" x2="2391.0" y2="478.0" stroke="#f8f8f8" stroke-width="2"/>
<line x1="2390.0" y1="437.0" x2="2390.0" y2="479.0" stroke="#f8f8f8" stroke-width="2"/>
<text x="1763.0" y="465.0" font-size="23" fill="#a6a6aa" font-weight="bold" textLength="221.0" lengthAdjust="spacingAndGlyphs">Double stars - show</text>
<circle cx="2027.0" cy="459.0" r="11.0" fill="#f4f4f4" stroke="#c4c4c4" stroke-width="4"/>
<circle cx="2027.0" cy="459.0" r="5.0" fill="#ffffff"/>
<text x="2049.0" y="467.0" font-size="19" fill="#b4b4b8" textLength="38.0" lengthAdjust="spacingAndGlyphs">Both</text>
<circle cx="2131.0" cy="459.0" r="11.5" fill="#fafafa" stroke="#c8c8c8" stroke-width="2"/>
<text x="2154.0" y="467.0" font-size="19" fill="#b4b4b8" textLength="63.0" lengthAdjust="spacingAndGlyphs">Primary</text>
<circle cx="2261.0" cy="459.0" r="11.5" fill="#fafafa" stroke="#c8c8c8" stroke-width="2"/>
<text x="2284.0" y="467.0" font-size="19" fill="#b4b4b8" textLength="87.0" lengthAdjust="spacingAndGlyphs">Secondary</text>
<text x="1746.0" y="523.0" font-size="24" fill="#177017" font-weight="bold" textLength="202.0" lengthAdjust="spacingAndGlyphs">Quality of the fit</text>
<rect x="1958.0" y="491.0" width="433.0" height="40.0" fill="#fff"/>
<rect x="1959.2" y="492.2" width="430.5" height="37.5" fill="none" stroke="#7a7a7a" stroke-width="2.5"/>
<line x1="1960.0" y1="529.5" x2="2390.0" y2="529.5" stroke="#a0a0a0" stroke-width="2"/>
<text x="1964.0" y="517.0" font-size="23" fill="#111" textLength="350.0" lengthAdjust="spacingAndGlyphs">Reliable size. Can fit to shape models</text>
<polyline points="2367.0,506.0 2374.0,513.0 2381.0,506.0" fill="none" stroke="#555" stroke-width="1.8"/>
<text x="1798.0" y="563.0" font-size="24" fill="#8a0f24" font-weight="bold" textLength="147.0" lengthAdjust="spacingAndGlyphs">Review flags</text>
<rect x="1958.0" y="535.0" width="433.0" height="38.0" fill="#dcfcfc"/>
<rect x="1958.0" y="535.0" width="433.0" height="4.0" fill="#707070"/>
<rect x="1958.0" y="535.0" width="4.0" height="38.0" fill="#707070"/>
<line x1="1958.0" y1="572.5" x2="2391.0" y2="572.5" stroke="#f2f2f2" stroke-width="1.5"/>
<rect x="1969" y="543" width="24" height="24" rx="5" fill="#f8f8f8" fill-opacity="0.3" stroke="#5c5c5c" stroke-width="2"/>
<text x="2005.5" y="563.0" font-size="24" fill="#111" textLength="314.0" lengthAdjust="spacingAndGlyphs">0 items are tagged for review</text>
<rect x="1728.0" y="579.0" width="678.0" height="163.0" fill="#e6fcfc"/>
<rect x="1728.0" y="579.0" width="678.0" height="4.0" fill="#6c6c6c"/>
<rect x="1728.0" y="579.0" width="4.0" height="163.0" fill="#6c6c6c"/>
<line x1="1728.0" y1="741.0" x2="2406.0" y2="741.0" stroke="#dadada" stroke-width="2"/>
<line x1="2405.0" y1="579.0" x2="2405.0" y2="742.0" stroke="#e0e0e0" stroke-width="2"/>
<text x="1752.0" y="631.5" font-size="22" fill="#7a1030" font-weight="bold" text-anchor="middle">P</text>
<text x="1752.0" y="657.0" font-size="22" fill="#7a1030" font-weight="bold" text-anchor="middle">L</text>
<text x="1752.0" y="683.0" font-size="22" fill="#7a1030" font-weight="bold" text-anchor="middle">O</text>
<text x="1752.0" y="709.0" font-size="22" fill="#7a1030" font-weight="bold" text-anchor="middle">T</text>
<text x="1784.5" y="623.0" font-size="24" fill="#7a1030" font-weight="bold" textLength="63.0" lengthAdjust="spacingAndGlyphs">Scale</text>
<rect x="1862.0" y="596.0" width="539.0" height="37.0" fill="#fff8d8"/>
<rect x="1871.0" y="606.5" width="517.0" height="6.5" fill="#e6e6e6" stroke="#c4c4c4" stroke-width="1.2"/>
<line x1="1879.0" y1="626.0" x2="1879.0" y2="633.0" stroke="#8c8c9c" stroke-width="1.8"/>
<line x1="1904.2" y1="626.0" x2="1904.2" y2="633.0" stroke="#8c8c9c" stroke-width="1.8"/>
<line x1="1929.4" y1="626.0" x2="1929.4" y2="633.0" stroke="#8c8c9c" stroke-width="1.8"/>
<line x1="1954.6" y1="626.0" x2="1954.6" y2="633.0" stroke="#8c8c9c" stroke-width="1.8"/>
<line x1="1979.8" y1="626.0" x2="1979.8" y2="633.0" stroke="#8c8c9c" stroke-width="1.8"/>
<line x1="2005.0" y1="626.0" x2="2005.0" y2="633.0" stroke="#8c8c9c" stroke-width="1.8"/>
<line x1="2030.2" y1="626.0" x2="2030.2" y2="633.0" stroke="#8c8c9c" stroke-width="1.8"/>
<line x1="2055.4" y1="626.0" x2="2055.4" y2="633.0" stroke="#8c8c9c" stroke-width="1.8"/>
<line x1="2080.6" y1="626.0" x2="2080.6" y2="633.0" stroke="#8c8c9c" stroke-width="1.8"/>
<line x1="2105.8" y1="626.0" x2="2105.8" y2="633.0" stroke="#8c8c9c" stroke-width="1.8"/>
<line x1="2131.0" y1="626.0" x2="2131.0" y2="633.0" stroke="#8c8c9c" stroke-width="1.8"/>
<line x1="2156.2" y1="626.0" x2="2156.2" y2="633.0" stroke="#8c8c9c" stroke-width="1.8"/>
<line x1="2181.4" y1="626.0" x2="2181.4" y2="633.0" stroke="#8c8c9c" stroke-width="1.8"/>
<line x1="2206.6" y1="626.0" x2="2206.6" y2="633.0" stroke="#8c8c9c" stroke-width="1.8"/>
<line x1="2231.8" y1="626.0" x2="2231.8" y2="633.0" stroke="#8c8c9c" stroke-width="1.8"/>
<line x1="2257.0" y1="626.0" x2="2257.0" y2="633.0" stroke="#8c8c9c" stroke-width="1.8"/>
<line x1="2282.2" y1="626.0" x2="2282.2" y2="633.0" stroke="#8c8c9c" stroke-width="1.8"/>
<line x1="2307.4" y1="626.0" x2="2307.4" y2="633.0" stroke="#8c8c9c" stroke-width="1.8"/>
<line x1="2332.6" y1="626.0" x2="2332.6" y2="633.0" stroke="#8c8c9c" stroke-width="1.8"/>
<line x1="2357.8" y1="626.0" x2="2357.8" y2="633.0" stroke="#8c8c9c" stroke-width="1.8"/>
<line x1="2383.0" y1="626.0" x2="2383.0" y2="633.0" stroke="#8c8c9c" stroke-width="1.8"/>
<path d="M2124.0,601.5 h12 v14 l-6.0,6 l-6.0,-6 z" fill="#0a64c8"/>
<text x="1784.5" y="675.0" font-size="24" fill="#7a1030" font-weight="bold" textLength="47.0" lengthAdjust="spacingAndGlyphs">Size</text>
<rect x="1845.0" y="647.0" width="326.0" height="44.0" fill="#f3fde8"/>
<rect x="1845.0" y="647.0" width="326.0" height="3.0" fill="#6c6c6c"/>
<rect x="1845.0" y="647.0" width="3.0" height="44.0" fill="#6c6c6c"/>
<line x1="1845.0" y1="690.0" x2="2171.0" y2="690.0" stroke="#e6e6e6" stroke-width="2"/>
<circle cx="1877.0" cy="668.5" r="12.5" fill="#0c5fb4"/>
<circle cx="1877.0" cy="668.5" r="5.0" fill="#fff"/>
<text x="1901.5" y="675.0" font-size="24" fill="#7a1030" font-weight="bold" textLength="73.0" lengthAdjust="spacingAndGlyphs">normal</text>
<circle cx="2004.5" cy="668.5" r="11.5" fill="#fafafa" stroke="#6a6a6a" stroke-width="2"/>
<text x="2029.0" y="675.0" font-size="24" fill="#7a1030" font-weight="bold" textLength="35.0" lengthAdjust="spacingAndGlyphs">x 2</text>
<circle cx="2093.0" cy="668.5" r="11.5" fill="#fafafa" stroke="#6a6a6a" stroke-width="2"/>
<text x="2117.5" y="675.0" font-size="24" fill="#7a1030" font-weight="bold" textLength="35.0" lengthAdjust="spacingAndGlyphs">x 5</text>
<text x="2215.5" y="678.0" font-size="24" fill="#880f88" font-weight="bold" textLength="142.0" lengthAdjust="spacingAndGlyphs">Form opacity</text>
<rect x="2172.0" y="692.5" width="230.0" height="41.5" fill="#fff8d8"/>
<rect x="2184.0" y="704.5" width="204.0" height="6.5" fill="#e6e6e6" stroke="#c4c4c4" stroke-width="1.2"/>
<line x1="2193.0" y1="727.0" x2="2193.0" y2="734.0" stroke="#8c8c9c" stroke-width="1.8"/>
<line x1="2230.8" y1="727.0" x2="2230.8" y2="734.0" stroke="#8c8c9c" stroke-width="1.8"/>
<line x1="2268.6" y1="727.0" x2="2268.6" y2="734.0" stroke="#8c8c9c" stroke-width="1.8"/>
<line x1="2306.4" y1="727.0" x2="2306.4" y2="734.0" stroke="#8c8c9c" stroke-width="1.8"/>
<line x1="2344.2" y1="727.0" x2="2344.2" y2="734.0" stroke="#8c8c9c" stroke-width="1.8"/>
<line x1="2382.0" y1="727.0" x2="2382.0" y2="734.0" stroke="#8c8c9c" stroke-width="1.8"/>
<path d="M2372,696 h16 v18 l-8,7 l-8,-7 z" fill="#0a64c8"/>
<text x="1787.0" y="727.0" font-size="24" fill="#7a1030" font-weight="bold" textLength="205.0" lengthAdjust="spacingAndGlyphs">Scroll range x1.25</text>
<rect x="2009" y="707" width="23" height="23" rx="5" fill="#f8f8f8" fill-opacity="0.3" stroke="#5c5c5c" stroke-width="2"/>
<text x="1756.0" y="785.5" font-size="24" fill="#161616" textLength="186.0" lengthAdjust="spacingAndGlyphs">RMS fit 0.0 ±0.0 km</text>
<rect x="1740.0" y="804.5" width="653.0" height="928.5" fill="#fff"/>
<rect x="1740.0" y="804.5" width="653.0" height="2.0" fill="#a0a0a0"/>
<rect x="1740.0" y="804.5" width="2.0" height="928.5" fill="#a0a0a0"/>
<rect x="1742.0" y="806.5" width="651.0" height="2.0" fill="#696969"/>
<rect x="1742.0" y="806.5" width="2.0" height="926.5" fill="#696969"/>
<rect x="1744.0" y="1700.0" width="648.0" height="33.0" fill="#f0f0f0"/>
<line x1="1778.0" y1="1716.0" x2="2258.0" y2="1716.0" stroke="#858585" stroke-width="4"/>
<line x1="1744.0" y1="1732.5" x2="2393.0" y2="1732.5" stroke="#e2e2e2" stroke-width="1.5"/>
<line x1="2392.5" y1="808.0" x2="2392.5" y2="1733.0" stroke="#e2e2e2" stroke-width="1.5"/>
<g>
<rect x="1754.0" y="818.0" width="122.0" height="7.5" fill="#a887cc"/>
<rect x="1755.0" y="819.5" width="120.0" height="4.5" fill="#4a1c7c"/>
<rect x="1754.0" y="842.0" width="132.0" height="7.5" fill="#ff5050"/>
<rect x="1755.0" y="843.5" width="130.0" height="4.5" fill="#ff0000"/>
<rect x="1754.0" y="866.0" width="132.0" height="7.5" fill="#5a5aff"/>
<rect x="1755.0" y="867.5" width="130.0" height="4.5" fill="#0000f0"/>
<rect x="1754.0" y="890.0" width="132.0" height="7.5" fill="#b080e8"/>
<rect x="1755.0" y="891.5" width="130.0" height="4.5" fill="#7a28d0"/>
<rect x="1756.0" y="916.0" width="6.0" height="6.0" fill="#ff70c8"/>
<rect x="1786.0" y="916.0" width="6.0" height="6.0" fill="#ff70c8"/>
<rect x="1816.0" y="916.0" width="6.0" height="6.0" fill="#ff70c8"/>
<rect x="1846.0" y="916.0" width="6.0" height="6.0" fill="#ff70c8"/>
<rect x="1876.0" y="916.0" width="6.0" height="6.0" fill="#ff70c8"/>
<clipPath id="lc"><rect x="1744" y="808" width="648" height="890"/></clipPath>
<g clip-path="url(#lc)">
<text x='1929' y='832' font-size='23' fill='#2a2a2a' font-family='"Liberation Mono", monospace' textLength='478.2' lengthAdjust='spacingAndGlyphs'>1(M) G Tow, near MacUngie, PA</text>
<text x='1929' y='856' font-size='23' fill='#2a2a2a' font-family='"Liberation Mono", monospace' textLength='494.7' lengthAdjust='spacingAndGlyphs'>2    J Dunham, near Fountain H</text>
<text x='1929' y='880' font-size='23' fill='#2a2a2a' font-family='"Liberation Mono", monospace' textLength='445.2' lengthAdjust='spacingAndGlyphs'>3    T Blank, near Fountain</text>
<text x='1929' y='904' font-size='23' fill='#2a2a2a' font-family='"Liberation Mono", monospace' textLength='428.7' lengthAdjust='spacingAndGlyphs'>4    P Maley, near Buckeye</text>
<text x='1929' y='928' font-size='23' fill='#2a2a2a' font-family='"Liberation Mono", monospace' textLength='230.9' lengthAdjust='spacingAndGlyphs'>5(P) Predicted</text>
</g></g>
<line x1="1705.0" y1="904.0" x2="1705.0" y2="938.0" stroke="#707880" stroke-width="2.4"/>
<line x1="834.0" y1="1795.0" x2="868.0" y2="1795.0" stroke="#707880" stroke-width="2.4"/>
<rect x="1880.0" y="1360.0" width="900.0" height="273.0" fill="#b5c8e6"/>
<rect x="1881.5" y="1361.5" width="897.0" height="270.0" fill="none" stroke="#5c6068" stroke-width="3"/>
<text x="1885.5" y="1395.0" font-size="24" fill="#2c3a58" font-weight="bold" textLength="77.0" lengthAdjust="spacingAndGlyphs">DAMIT</text>
<rect x="1973" y="1368" width="30" height="33" rx="6" fill="#f4f6fa"/>
<rect x="1976.0" y="1371.0" width="24.0" height="27.0" fill="#62c49e"/>
<text x="1988.0" y="1392.5" font-size="22" fill="#1a3a2a" text-anchor="middle">1</text>
<rect x="2009" y="1368" width="30" height="33" rx="6" fill="#f4f6fa"/>
<rect x="2012.0" y="1371.0" width="24.0" height="27.0" fill="#00ec00"/>
<text x="2024.0" y="1392.5" font-size="24" fill="#000" font-weight="bold" text-anchor="middle">2</text>
<rect x="2045" y="1368" width="31" height="33" rx="6" fill="#f4f6fa"/>
<rect x="2048.0" y="1371.0" width="25.0" height="27.0" fill="#e9ebee"/>
<text x="2060.5" y="1392.5" font-size="22" fill="#b0b0b0" text-anchor="middle">3</text>
<rect x="2081" y="1368" width="31" height="33" rx="6" fill="#f4f6fa"/>
<rect x="2084.0" y="1371.0" width="25.0" height="27.0" fill="#e9ebee"/>
<text x="2096.5" y="1392.5" font-size="22" fill="#b0b0b0" text-anchor="middle">4</text>
<rect x="2117" y="1368" width="31" height="33" rx="6" fill="#f4f6fa"/>
<rect x="2120.0" y="1371.0" width="25.0" height="27.0" fill="#e9ebee"/>
<text x="2132.5" y="1392.5" font-size="22" fill="#b0b0b0" text-anchor="middle">5</text>
<rect x="2153" y="1368" width="31" height="33" rx="6" fill="#f4f6fa"/>
<rect x="2156.0" y="1371.0" width="25.0" height="27.0" fill="#e9ebee"/>
<text x="2168.5" y="1392.5" font-size="22" fill="#b0b0b0" text-anchor="middle">6</text>
<rect x="2195" y="1367" width="141" height="38" rx="6" fill="#eef3f8"/>
<rect x="2199.0" y="1371.0" width="133.0" height="30.0" fill="#b2ecf4"/>
<text x="2205.0" y="1395.0" font-size="23" fill="#1a1a1a" textLength="120.0" lengthAdjust="spacingAndGlyphs">Light curves</text>
<text x="2348.5" y="1395.0" font-size="24" fill="#2c3a58" font-weight="bold" textLength="62.0" lengthAdjust="spacingAndGlyphs">ISAM</text>
<rect x="2421" y="1368" width="30" height="34" rx="7" fill="#eceef2"/>
<text x="2436.0" y="1393.0" font-size="22" fill="#b4b4b4" text-anchor="middle">1</text>
<rect x="2469" y="1368" width="30" height="34" rx="7" fill="#eceef2"/>
<text x="2484.0" y="1393.0" font-size="22" fill="#b4b4b4" text-anchor="middle">2</text>
<rect x="2517" y="1368" width="30" height="34" rx="7" fill="#eceef2"/>
<text x="2532.0" y="1393.0" font-size="22" fill="#b4b4b4" text-anchor="middle">3</text>
<rect x="2565" y="1368" width="30" height="34" rx="7" fill="#eceef2"/>
<text x="2580.0" y="1393.0" font-size="22" fill="#b4b4b4" text-anchor="middle">4</text>
<rect x="2613" y="1368" width="30" height="34" rx="7" fill="#eceef2"/>
<text x="2628.0" y="1393.0" font-size="22" fill="#b4b4b4" text-anchor="middle">5</text>
<rect x="2661" y="1368" width="30" height="34" rx="7" fill="#eceef2"/>
<text x="2676.0" y="1393.0" font-size="22" fill="#b4b4b4" text-anchor="middle">6</text>
<rect x="2709" y="1366" width="29" height="34" rx="4" fill="#f0f2f6"/>
<rect x="2713.0" y="1370.0" width="21.0" height="26.0" fill="#3434c8"/>
<text x="2723.5" y="1393.0" font-size="24" fill="#ffee00" font-weight="bold" text-anchor="middle">?</text>
<rect x="2741" y="1366" width="31" height="34" rx="4" fill="#f0f2f6"/>
<rect x="2745.0" y="1370.0" width="23.0" height="26.0" fill="#e0102c"/>
<text x="2756.5" y="1392.0" font-size="22" fill="#fff" font-weight="bold" text-anchor="middle">X</text>
<text x="1896.0" y="1428.0" font-size="22" fill="#3a3a48" textLength="66.0" lengthAdjust="spacingAndGlyphs">Source</text>
<text x="2013.5" y="1428.0" font-size="22" fill="#3a3a48" textLength="20.0" lengthAdjust="spacingAndGlyphs">ID</text>
<text x="2081.5" y="1428.0" font-size="22" fill="#3a3a48" textLength="76.0" lengthAdjust="spacingAndGlyphs">Surf/Vol</text>
<rect x="1891.0" y="1435.0" width="78.0" height="35.0" fill="#f2f2f2" stroke="#dcdcdc" stroke-width="1.5"/>
<rect x="1973.0" y="1435.0" width="106.0" height="35.0" fill="#f2f2f2" stroke="#dcdcdc" stroke-width="1.5"/>
<rect x="2083.0" y="1435.0" width="75.0" height="35.0" fill="#f2f2f2" stroke="#dcdcdc" stroke-width="1.5"/>
<line x1="1973.0" y1="1469.0" x2="2079.0" y2="1469.0" stroke="#0a64c8" stroke-width="2.5"/>
<text x="1896.0" y="1462.0" font-size="22" fill="#111" textLength="67.0" lengthAdjust="spacingAndGlyphs">DAMIT</text>
<rect x="1977.0" y="1440.0" width="38.0" height="25.0" fill="#0a6ed0"/>
<text x="1977.0" y="1462.0" font-size="22" fill="#fff" textLength="37.0" lengthAdjust="spacingAndGlyphs">147</text>
<line x1="2016.0" y1="1440.0" x2="2016.0" y2="1466.0" stroke="#e06020" stroke-width="1.5"/>
<text x="2088.0" y="1462.0" font-size="22" fill="#111" textLength="53.0" lengthAdjust="spacingAndGlyphs">1.033</text>
<rect x="2164.0" y="1409.0" width="601.0" height="97.0" fill="#fff8da"/>
<rect x="2164.0" y="1409.0" width="601.0" height="3.0" fill="#6a6a6a"/>
<rect x="2164.0" y="1409.0" width="3.0" height="97.0" fill="#6a6a6a"/>
<line x1="2164.0" y1="1505.0" x2="2765.0" y2="1505.0" stroke="#f4f4f4" stroke-width="2"/>
<text x="2210.5" y="1430.0" font-size="22" fill="#1a1a1a" textLength="96.0" lengthAdjust="spacingAndGlyphs">Fit quality</text>
<text x="2367.0" y="1429.0" font-size="22" fill="#1a1a1a" textLength="80.0" lengthAdjust="spacingAndGlyphs">Ph Corr</text>
<text x="2468.5" y="1430.0" font-size="22" fill="#1a1a1a" textLength="113.0" lengthAdjust="spacingAndGlyphs">Minimum dia</text>
<text x="2620.5" y="1431.0" font-size="22" fill="#1a1a1a" textLength="118.0" lengthAdjust="spacingAndGlyphs">Maximum dia</text>
<rect x="2169.0" y="1437.0" width="192.0" height="40.0" fill="#fff" stroke="#a8a8a8" stroke-width="1.5"/>
<text x="2174.0" y="1465.0" font-size="23" fill="#111" textLength="75.0" lengthAdjust="spacingAndGlyphs">Good fit</text>
<polyline points="2336.0,1452.0 2343.0,1459.0 2350.0,1452.0" fill="none" stroke="#555" stroke-width="1.8"/>
<rect x="2372.0" y="1438.0" width="74.0" height="36.0" fill="#f0f0f0" stroke="#e0e0e0" stroke-width="1.5"/>
<line x1="2374.0" y1="1473.0" x2="2444.0" y2="1473.0" stroke="#8a8a8a" stroke-width="2"/>
<text x="2376.0" y="1465.0" font-size="22" fill="#111">0°</text>
<rect x="2464.0" y="1438.0" width="74.0" height="36.0" fill="#f0f0f0" stroke="#e0e0e0" stroke-width="1.5"/>
<line x1="2466.0" y1="1473.0" x2="2536.0" y2="1473.0" stroke="#8a8a8a" stroke-width="2"/>
<text x="2468.0" y="1465.0" font-size="22" fill="#111">53</text>
<rect x="2620.0" y="1438.0" width="75.0" height="36.0" fill="#f0f0f0" stroke="#e0e0e0" stroke-width="1.5"/>
<line x1="2622.0" y1="1473.0" x2="2693.0" y2="1473.0" stroke="#8a8a8a" stroke-width="2"/>
<text x="2624.0" y="1465.0" font-size="22" fill="#111">54</text>
<rect x="2544" y="1437.5" width="58" height="45.5" rx="5" fill="#f8f8f8" stroke="#dedede" stroke-width="1.2"/>
<rect x="2548.0" y="1441.5" width="50.0" height="36.5" fill="#8eee1e"/>
<text x="2573.0" y="1470.0" font-size="24" fill="#111" text-anchor="middle" textLength="38.0" lengthAdjust="spacingAndGlyphs">Set</text>
<rect x="2700" y="1437.5" width="58" height="45.5" rx="5" fill="#f8f8f8" stroke="#dedede" stroke-width="1.2"/>
<rect x="2704.0" y="1441.5" width="50.0" height="36.5" fill="#8eee1e"/>
<text x="2729.0" y="1470.0" font-size="24" fill="#111" text-anchor="middle" textLength="38.0" lengthAdjust="spacingAndGlyphs">Set</text>
<text x="2172.0" y="1500.0" font-size="22" fill="#7a1a9a" textLength="74.0" lengthAdjust="spacingAndGlyphs">Good fit</text>
<text x="2375.0" y="1498.0" font-size="22" fill="#7a1a9a">0°</text>
<text x="2467.0" y="1499.0" font-size="22" fill="#7a1a9a">53</text>
<text x="2623.5" y="1499.0" font-size="22" fill="#7a1a9a">54</text>
<rect x="1887.0" y="1475.0" width="66.0" height="39.0" fill="#ffff00" stroke="#3a3a3a" stroke-width="2"/>
<text x="1920.0" y="1505.0" font-size="24" fill="#000" font-weight="bold" text-anchor="middle" textLength="40.0" lengthAdjust="spacingAndGlyphs">Dia</text>
<text x="1961.0" y="1500.0" font-size="22" fill="#3a4868" font-style="italic" textLength="192.0" lengthAdjust="spacingAndGlyphs">Values in memory =&gt;</text>
<text x="2096.5" y="1531.0" font-size="22" fill="#000" font-weight="bold" textLength="532.0" lengthAdjust="spacingAndGlyphs">Many chords without major differences from SM</text>
<text x="1896.0" y="1563.0" font-size="22" fill="#3a3a48" textLength="112.0" lengthAdjust="spacingAndGlyphs">Version info</text>
<rect x="2018.0" y="1540.5" width="536.0" height="33.5" fill="#f2f2f2" stroke="#dcdcdc" stroke-width="1.2"/>
<line x1="2019.0" y1="1573.0" x2="2553.0" y2="1573.0" stroke="#7a7a7a" stroke-width="2.2"/>
<text x="2022.0" y="1563.0" font-size="22" fill="#111" textLength="100.0" lengthAdjust="spacingAndGlyphs">2011-04-19</text>
<text x="1894.5" y="1605.5" font-size="22" fill="#3a3a48" textLength="112.0" lengthAdjust="spacingAndGlyphs">Image scale</text>
<rect x="2018.0" y="1579.0" width="538.0" height="46.0" fill="#fff8da"/>
<line x1="2038.5" y1="1591.0" x2="2038.5" y2="1598.0" stroke="#9a9aa8" stroke-width="1.6"/>
<line x1="2050.5" y1="1591.0" x2="2050.5" y2="1598.0" stroke="#9a9aa8" stroke-width="1.6"/>
<line x1="2062.5" y1="1591.0" x2="2062.5" y2="1598.0" stroke="#9a9aa8" stroke-width="1.6"/>
<line x1="2074.5" y1="1591.0" x2="2074.5" y2="1598.0" stroke="#9a9aa8" stroke-width="1.6"/>
<line x1="2086.5" y1="1591.0" x2="2086.5" y2="1598.0" stroke="#9a9aa8" stroke-width="1.6"/>
<line x1="2098.5" y1="1591.0" x2="2098.5" y2="1598.0" stroke="#9a9aa8" stroke-width="1.6"/>
<line x1="2110.5" y1="1591.0" x2="2110.5" y2="1598.0" stroke="#9a9aa8" stroke-width="1.6"/>
<line x1="2122.5" y1="1591.0" x2="2122.5" y2="1598.0" stroke="#9a9aa8" stroke-width="1.6"/>
<line x1="2134.5" y1="1591.0" x2="2134.5" y2="1598.0" stroke="#9a9aa8" stroke-width="1.6"/>
<line x1="2146.5" y1="1591.0" x2="2146.5" y2="1598.0" stroke="#9a9aa8" stroke-width="1.6"/>
<line x1="2158.5" y1="1591.0" x2="2158.5" y2="1598.0" stroke="#9a9aa8" stroke-width="1.6"/>
<line x1="2170.5" y1="1591.0" x2="2170.5" y2="1598.0" stroke="#9a9aa8" stroke-width="1.6"/>
<line x1="2182.5" y1="1591.0" x2="2182.5" y2="1598.0" stroke="#9a9aa8" stroke-width="1.6"/>
<line x1="2194.5" y1="1591.0" x2="2194.5" y2="1598.0" stroke="#9a9aa8" stroke-width="1.6"/>
<line x1="2206.5" y1="1591.0" x2="2206.5" y2="1598.0" stroke="#9a9aa8" stroke-width="1.6"/>
<line x1="2218.5" y1="1591.0" x2="2218.5" y2="1598.0" stroke="#9a9aa8" stroke-width="1.6"/>
<line x1="2230.5" y1="1591.0" x2="2230.5" y2="1598.0" stroke="#9a9aa8" stroke-width="1.6"/>
<line x1="2242.5" y1="1591.0" x2="2242.5" y2="1598.0" stroke="#9a9aa8" stroke-width="1.6"/>
<line x1="2254.5" y1="1591.0" x2="2254.5" y2="1598.0" stroke="#9a9aa8" stroke-width="1.6"/>
<line x1="2266.5" y1="1591.0" x2="2266.5" y2="1598.0" stroke="#9a9aa8" stroke-width="1.6"/>
<line x1="2278.5" y1="1591.0" x2="2278.5" y2="1598.0" stroke="#9a9aa8" stroke-width="1.6"/>
<line x1="2290.5" y1="1591.0" x2="2290.5" y2="1598.0" stroke="#9a9aa8" stroke-width="1.6"/>
<line x1="2302.5" y1="1591.0" x2="2302.5" y2="1598.0" stroke="#9a9aa8" stroke-width="1.6"/>
<line x1="2314.5" y1="1591.0" x2="2314.5" y2="1598.0" stroke="#9a9aa8" stroke-width="1.6"/>
<line x1="2326.5" y1="1591.0" x2="2326.5" y2="1598.0" stroke="#9a9aa8" stroke-width="1.6"/>
<line x1="2338.5" y1="1591.0" x2="2338.5" y2="1598.0" stroke="#9a9aa8" stroke-width="1.6"/>
<line x1="2350.5" y1="1591.0" x2="2350.5" y2="1598.0" stroke="#9a9aa8" stroke-width="1.6"/>
<line x1="2362.5" y1="1591.0" x2="2362.5" y2="1598.0" stroke="#9a9aa8" stroke-width="1.6"/>
<line x1="2374.5" y1="1591.0" x2="2374.5" y2="1598.0" stroke="#9a9aa8" stroke-width="1.6"/>
<line x1="2386.5" y1="1591.0" x2="2386.5" y2="1598.0" stroke="#9a9aa8" stroke-width="1.6"/>
<line x1="2398.5" y1="1591.0" x2="2398.5" y2="1598.0" stroke="#9a9aa8" stroke-width="1.6"/>
<line x1="2410.5" y1="1591.0" x2="2410.5" y2="1598.0" stroke="#9a9aa8" stroke-width="1.6"/>
<line x1="2422.5" y1="1591.0" x2="2422.5" y2="1598.0" stroke="#9a9aa8" stroke-width="1.6"/>
<line x1="2434.5" y1="1591.0" x2="2434.5" y2="1598.0" stroke="#9a9aa8" stroke-width="1.6"/>
<line x1="2446.5" y1="1591.0" x2="2446.5" y2="1598.0" stroke="#9a9aa8" stroke-width="1.6"/>
<line x1="2458.5" y1="1591.0" x2="2458.5" y2="1598.0" stroke="#9a9aa8" stroke-width="1.6"/>
<line x1="2470.5" y1="1591.0" x2="2470.5" y2="1598.0" stroke="#9a9aa8" stroke-width="1.6"/>
<line x1="2482.5" y1="1591.0" x2="2482.5" y2="1598.0" stroke="#9a9aa8" stroke-width="1.6"/>
<line x1="2494.5" y1="1591.0" x2="2494.5" y2="1598.0" stroke="#9a9aa8" stroke-width="1.6"/>
<line x1="2506.5" y1="1591.0" x2="2506.5" y2="1598.0" stroke="#9a9aa8" stroke-width="1.6"/>
<line x1="2518.5" y1="1591.0" x2="2518.5" y2="1598.0" stroke="#9a9aa8" stroke-width="1.6"/>
<line x1="2530.5" y1="1591.0" x2="2530.5" y2="1598.0" stroke="#9a9aa8" stroke-width="1.6"/>
<rect x="2030.0" y="1612.5" width="511.0" height="7.0" fill="#e2e2e2" stroke="#c6c6c6" stroke-width="1.2"/>
<path d="M2360,1623 v-13 q0,-7.5 8,-7.5 q8,0 8,7.5 v13 z" fill="#0a64c8"/>
<rect x="2575.0" y="1541.0" width="194.0" height="86.5" fill="#fbfbfb"/>
<rect x="2580.0" y="1546.5" width="184.0" height="74.5" fill="#ffc2cc"/>
<text x="2672.0" y="1579.0" font-size="24" fill="#a01030" font-weight="bold" text-anchor="middle" textLength="145.0" lengthAdjust="spacingAndGlyphs">Save/update</text>
<text x="2672.0" y="1605.0" font-size="24" fill="#a01030" font-weight="bold" text-anchor="middle" textLength="116.0" lengthAdjust="spacingAndGlyphs">model 147</text>
</svg>
</body></html>
